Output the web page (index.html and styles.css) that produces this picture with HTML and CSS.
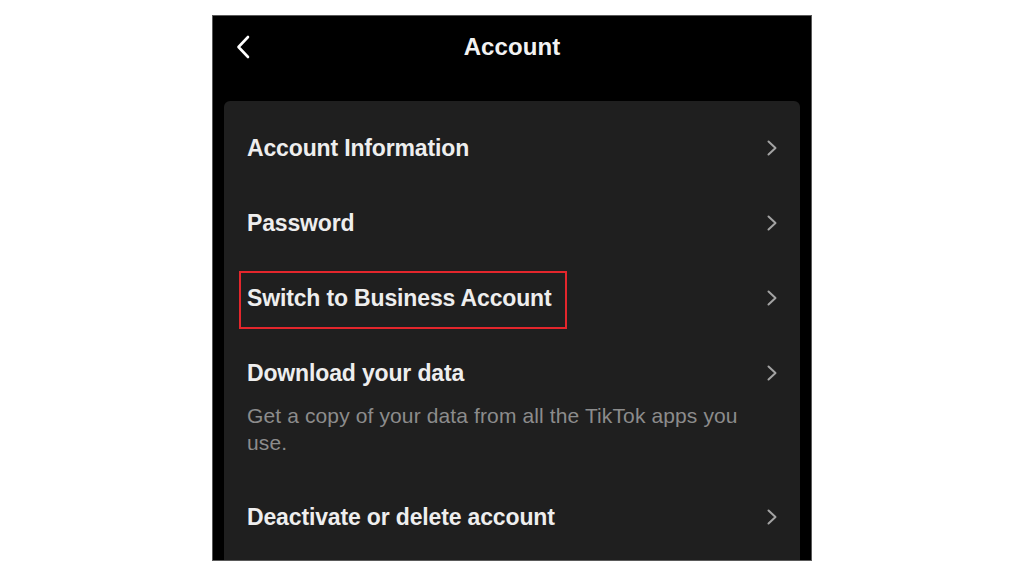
FILE: index.html
```html
<!DOCTYPE html>
<html lang="en">
<head>
<meta charset="utf-8">
<title>Account</title>
<link rel="stylesheet" href="styles.css">
</head>
<body>
<div class="phone">
  <header class="topbar">
    <div class="back">
      <svg width="14" height="24" viewBox="0 0 14 24"><path d="M12 2 L2.5 12 L12 22" fill="none" stroke="#fff" stroke-width="2.6" stroke-linecap="round" stroke-linejoin="round"/></svg>
    </div>
    <h1 class="title">Account</h1>
    <div></div>
  </header>
  <section class="card">
    <div class="row">
      <div class="row-head"><span class="label">Account Information</span><svg class="chev" width="10" height="16" viewBox="0 0 10 16"><path d="M1.5 1.5 L8.5 8 L1.5 14.5" fill="none" stroke="#a3a3a3" stroke-width="2" stroke-linecap="round" stroke-linejoin="round"/></svg></div>
    </div>
    <div class="row">
      <div class="row-head"><span class="label">Password</span><svg class="chev" width="10" height="16" viewBox="0 0 10 16"><path d="M1.5 1.5 L8.5 8 L1.5 14.5" fill="none" stroke="#a3a3a3" stroke-width="2" stroke-linecap="round" stroke-linejoin="round"/></svg></div>
    </div>
    <div class="row">
      <div class="row-head"><span class="label highlight">Switch to Business Account</span><svg class="chev" width="10" height="16" viewBox="0 0 10 16"><path d="M1.5 1.5 L8.5 8 L1.5 14.5" fill="none" stroke="#a3a3a3" stroke-width="2" stroke-linecap="round" stroke-linejoin="round"/></svg></div>
    </div>
    <div class="row">
      <div class="row-head"><span class="label">Download your data</span><svg class="chev" width="10" height="16" viewBox="0 0 10 16"><path d="M1.5 1.5 L8.5 8 L1.5 14.5" fill="none" stroke="#a3a3a3" stroke-width="2" stroke-linecap="round" stroke-linejoin="round"/></svg></div>
      <p class="desc">Get a copy of your data from all the TikTok apps you use.</p>
    </div>
    <div class="row">
      <div class="row-head"><span class="label">Deactivate or delete account</span><svg class="chev" width="10" height="16" viewBox="0 0 10 16"><path d="M1.5 1.5 L8.5 8 L1.5 14.5" fill="none" stroke="#a3a3a3" stroke-width="2" stroke-linecap="round" stroke-linejoin="round"/></svg></div>
    </div>
  </section>
</div>
</body>
</html>
```

FILE: styles.css
```css
html, body {
  margin: 0;
  padding: 0;
  background: #ffffff;
}
body {
  font-family: "Liberation Sans", Arial, sans-serif;
  width: 1024px;
  height: 576px;
  overflow: hidden;
}
.phone {
  box-sizing: border-box;
  margin: 15px 0 0 212px;
  width: 600px;
  height: 546px;
  background: #000;
  border: 1px solid #5a5a5a;
  overflow: hidden;
  display: flex;
  flex-direction: column;
}
.topbar {
  height: 61px;
  display: grid;
  grid-template-columns: 1fr auto 1fr;
  align-items: center;
  padding: 0 23px;
}
.back {
  display: flex;
  align-items: center;
}
.back svg {
  display: block;
}
.title {
  margin: 0;
  color: #f2f2f2;
  font-size: 24px;
  font-weight: 700;
  letter-spacing: 0.1px;
}
.card {
  margin: 24px 11px 0 11px;
  background: #1f1f1f;
  border-radius: 6px 6px 0 0;
  padding: 9px 23px 0 23px;
  flex: 1;
}
.row {
  padding: 24px 0 23px 0;
}
.row-head {
  display: flex;
  align-items: center;
  justify-content: space-between;
  height: 28px;
}
.label {
  color: #eeeeee;
  font-size: 23px;
  font-weight: 700;
  line-height: 28px;
  letter-spacing: -0.15px;
}
.chev {
  display: block;
  flex: none;
}
.highlight {
  position: relative;
}
.highlight::after {
  content: "";
  position: absolute;
  left: -8px;
  right: -15px;
  top: -13px;
  bottom: -17px;
  border: 2px solid #e3262c;
}
.desc {
  margin: 15px 0 0 0;
  max-width: 503px;
  color: #8c8c8c;
  font-size: 21px;
  line-height: 27px;
  letter-spacing: 0.12px;
}
```
